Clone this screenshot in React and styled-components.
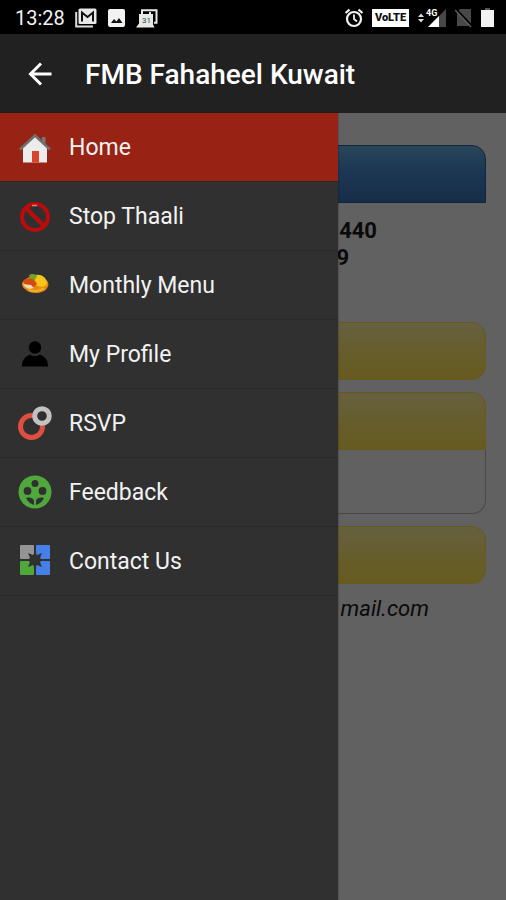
import React from "react";
import styled, { createGlobalStyle } from "styled-components";

const COLORS = {
  statusBar: "#000",
  appBar: "#212121",
  drawer: "#303030",
  divider: "#292929",
  active: "#982315",
  page: "#616161",
  text: "#f2f2f2",
};

const MENU = [
  { label: "Home", icon: HomeIcon },
  { label: "Stop Thaali", icon: StopIcon },
  { label: "Monthly Menu", icon: FoodIcon },
  { label: "My Profile", icon: ProfileIcon },
  { label: "RSVP", icon: RsvpIcon },
  { label: "Feedback", icon: FeedbackIcon },
  { label: "Contact Us", icon: ContactIcon },
];

const App = () => {
  return (
    <Screen>
      <GlobalStyle />
      <StatusBar />
      <AppBar>
        <BackButton type="button" aria-label="Back">
          <svg width="24" height="24" viewBox="0 0 24 24" fill="none">
            <path
              d="M23.500 12H2.500M13 1.500 2.500 12 13 22.500"
              stroke="#fff"
              strokeWidth="3"
            />
          </svg>
        </BackButton>
        <Title>FMB Fahaheel Kuwait</Title>
      </AppBar>
      <Body>
        <Content>
          <BlueHeader />
          <Phones>
            <Phone $end={109}>440</Phone>
            <Phone $end={137}>9</Phone>
          </Phones>
          <Cards>
            <YellowBar />
            <Panel>
              <YellowBar $open />
              <PanelBody />
            </Panel>
            <YellowBar />
          </Cards>
          <Email>mail.com</Email>
        </Content>
        <Drawer>
          {MENU.map(({ label, icon: Icon }, i) => (
            <MenuLink key={label} href="#" $active={i === 0}>
              <Icon />
              <MenuLabel>{label}</MenuLabel>
            </MenuLink>
          ))}
        </Drawer>
      </Body>
    </Screen>
  );
};

export default App;

function StatusBar() {
  return (
    <StatusRow>
      <Clock>13:28</Clock>
      <StatusGroup>
        <svg width="22" height="20" viewBox="0 0 22 20">
          <path d="M1.200 4v14.500H18" fill="none" stroke="#ddd" strokeWidth="2" />
          <rect x="3.500" y="0.500" width="18" height="15.500" rx="1.500" fill="#e8e8e8" />
          <path
            d="M7 13.500V4.500l5.500 4.500L18 4.500v9"
            fill="none"
            stroke="#111"
            strokeWidth="2"
          />
        </svg>
        <svg width="17" height="18" viewBox="0 0 17 18">
          <rect width="17" height="18" rx="2" fill="#f2f2f2" />
          <path d="m3 14 3-4 2.500 2.500L11 9l3.500 5z" fill="#111" />
        </svg>
        <svg width="22" height="19" viewBox="0 0 22 19">
          <path
            d="M6 4V1.200h14.500v12.600H18"
            fill="none"
            stroke="#e8e8e8"
            strokeWidth="2"
          />
          <path d="M3 5h14v10.500l1.500 3H0l3-4z" fill="#e8e8e8" />
          <path d="M6 3v3M14 3v3" stroke="#e8e8e8" strokeWidth="2" />
          <text x="6" y="14" fontSize="8" fontFamily="Roboto, sans-serif" fill="#444">
            31
          </text>
        </svg>
      </StatusGroup>
      <StatusGroup $end>
        <svg width="20" height="20" viewBox="0 0 20 20" fill="none" stroke="#f2f2f2">
          <circle cx="10" cy="11" r="7" strokeWidth="2.200" />
          <path d="M10 6.500V11l3 2.500" strokeWidth="1.800" />
          <path d="m1.500 5 4-3.300M18.500 5l-4-3.300" strokeWidth="2.200" />
        </svg>
        <Volte>VoLTE</Volte>
        <svg width="30" height="20" viewBox="0 0 30 20">
          <path d="m1 9 3-3.500L7 9zM1 11h6l-3 3.500z" fill="#ddd" />
          <path d="M11 19 29 1v18z" fill="#484848" />
          <path d="M11 19l11-11V19z" fill="#fff" />
          <text
            x="9"
            y="8"
            fontSize="9"
            fontWeight="700"
            fontFamily="Roboto, sans-serif"
            fill="#fff"
          >
            4G
          </text>
        </svg>
        <svg width="18" height="20" viewBox="0 0 18 20">
          <path d="M5 1h11v17H2V4z" fill="#484848" />
          <path d="m0 0 17 18" stroke="#000" strokeWidth="2" />
          <path d="m0 2 16 17" stroke="#5c5c5c" strokeWidth="1.500" />
        </svg>
        <svg width="13" height="20" viewBox="0 0 13 20">
          <path d="M4 0h5v2h4v17H0V2h4z" fill="#f2f2f2" />
          <path d="M4 0h5v2H4z" fill="#555" />
        </svg>
      </StatusGroup>
    </StatusRow>
  );
}

function HomeIcon() {
  return (
    <Glyph viewBox="0 0 34 34">
      <path d="M5 16 17 5l12 11v16.500H5z" fill="#ececec" />
      <path d="M24 7h3.500v7L24 11z" fill="#777" />
      <path d="M2 19.500 17 5.500l15 14" fill="none" stroke="#707070" strokeWidth="2.600" />
      <path d="M14 21h7v11.500h-7z" fill="#d8452f" />
    </Glyph>
  );
}

function StopIcon() {
  return (
    <Glyph viewBox="0 0 34 34" fill="none" stroke="#bd0b0b">
      <circle cx="17" cy="18" r="13" strokeWidth="4" />
      <path d="m8 9 18 18" strokeWidth="4" />
      <path d="M14 6.500h5" stroke="#d98080" strokeWidth="1.500" />
    </Glyph>
  );
}

function FoodIcon() {
  return (
    <Glyph viewBox="0 0 34 34">
      <path d="M4 15c4-7 19-11 24-3 3 2 3 6 1 8-3 6-17 7-22 1-2-1-3-3-3-6z" fill="#e8890f" />
      <path d="M15 8c6-3 13 0 14 7 0 4-7 5-11 2z" fill="#f6c51b" />
      <path d="M5 13c4-4 11-4 14 3l-4 4c-4-1-8-2-10-7z" fill="#d24a12" />
      <path d="M11 7c3-2 7-1 8 1l-2 4-5-2z" fill="#6fa32a" />
      <path d="m5 16 8 1 3 3-5 1c-3-1-5-3-6-5z" fill="#f3d9b8" />
      <path d="M11 22c5 2 12 1 15-2" fill="none" stroke="#f6b02a" strokeWidth="2" />
    </Glyph>
  );
}

function ProfileIcon() {
  return (
    <Glyph viewBox="0 0 34 34" fill="#000">
      <circle cx="17" cy="10.500" r="6.200" />
      <path d="M4 29.500c0-6 2-9 8-12 3 2 7 2 10 0 6 3 8 6 8 12z" />
    </Glyph>
  );
}

function RsvpIcon() {
  return (
    <Glyph viewBox="0 0 34 34" fill="none">
      <circle cx="13.500" cy="20.500" r="11" stroke="#de4f3f" strokeWidth="5" />
      <circle cx="24" cy="10" r="7.300" fill="#303030" stroke="#c2c2c2" strokeWidth="5" />
    </Glyph>
  );
}

function FeedbackIcon() {
  return (
    <Glyph viewBox="0 0 34 34">
      <circle cx="17" cy="17" r="16.500" fill="#50a83d" />
      <g fill="#303030">
        <circle cx="17" cy="8.500" r="3.500" />
        <circle cx="9.500" cy="16" r="3.900" />
        <circle cx="24.500" cy="16" r="3.900" />
        <path d="M8 23c4-1 7 0 8 2.500v4.500c-3-1-6-3-8-7zM26 23c-4-1-7 0-8 2.500v4.500c3-1 6-3 8-7z" />
      </g>
    </Glyph>
  );
}

function ContactIcon() {
  return (
    <Glyph viewBox="0 0 34 34">
      <rect x="2" y="1" width="14" height="14" rx="1" fill="#949494" />
      <rect x="18" y="1" width="14" height="14" rx="1" fill="#4680e6" />
      <rect x="2" y="17" width="14" height="14" rx="1" fill="#50a83d" />
      <rect x="18" y="17" width="14" height="14" rx="1" fill="#4680e6" />
      <path
        d="m10 9 5 2 2-3 2 3 5-2-2 5 3 2-3 2 2 5-5-2-2 3-2-3-5 2 2-5-3-2 3-2z"
        fill="#303030"
      />
    </Glyph>
  );
}

const GlobalStyle = createGlobalStyle`
  * {
    box-sizing: border-box;
  }
  body {
    margin: 0;
    background: ${COLORS.page};
    font-family: Roboto, "Liberation Sans", sans-serif;
  }
`;

const Screen = styled.div`
  display: flex;
  flex-direction: column;
  min-height: 100vh;
`;

const StatusRow = styled.div`
  display: flex;
  align-items: center;
  height: 34px;
  padding: 2px 12px 0 15px;
  background: ${COLORS.statusBar};
`;

const Clock = styled.span`
  margin-right: 10px;
  font-size: 20px;
  line-height: 24px;
  color: ${COLORS.text};
`;

const StatusGroup = styled.div`
  display: flex;
  align-items: center;
  gap: ${({ $end }) => ($end ? 8 : 11)}px;
  margin-left: ${({ $end }) => ($end ? "auto" : 0)};
`;

const Volte = styled.span`
  width: 37px;
  background: #fff;
  color: #111;
  font-size: 11px;
  font-weight: 900;
  line-height: 18px;
  text-align: center;
`;

const AppBar = styled.header`
  display: flex;
  align-items: center;
  height: 79px;
  padding: 0 28px;
  background: ${COLORS.appBar};
`;

const BackButton = styled.button`
  display: flex;
  margin-right: 33px;
  padding: 0;
  border: 0;
  background: none;
  cursor: pointer;
`;

const Title = styled.h1`
  margin: 0;
  padding-top: 2px;
  font-size: 28px;
  font-weight: 500;
  line-height: 32px;
  color: #fff;
  white-space: nowrap;
`;

const Body = styled.div`
  position: relative;
  flex: 1;
  display: flex;
  flex-direction: column;
`;

const Content = styled.main`
  padding: 32px 20px;
  color: #0a0a0a;
`;

const BlueHeader = styled.div`
  height: 58px;
  border: 1px solid #10263a;
  border-radius: 14px 14px 0 0;
  background: linear-gradient(#29465a, #1d3854 40%, #172d48);
`;

const Phones = styled.div`
  display: flex;
  flex-direction: column;
  align-items: flex-end;
  padding: 14px 0 51px;
`;

const Phone = styled.span`
  padding-right: ${({ $end }) => $end}px;
  font-size: 22px;
  font-weight: 700;
  line-height: 27px;
`;

const Cards = styled.div`
  display: flex;
  flex-direction: column;
  gap: 12px;
`;

const YellowBar = styled.div`
  height: 58px;
  border: 1px solid #65591f;
  border-radius: ${({ $open }) => ($open ? "14px 14px 0 0" : "14px")};
  background: linear-gradient(#66603f, #665d2c 55%, #665b1f);
`;

const Panel = styled.section`
  display: flex;
  flex-direction: column;
`;

const PanelBody = styled.div`
  height: 64px;
  border: 1px solid #484848;
  border-top: 0;
  border-radius: 0 0 14px 14px;
`;

const Email = styled.p`
  margin: 10px 0 0;
  padding-right: 57px;
  font-size: 22px;
  font-style: italic;
  line-height: 30px;
  text-align: right;
`;

const Drawer = styled.nav`
  position: absolute;
  top: 0;
  bottom: 0;
  left: 0;
  width: 338px;
  max-width: 80%;
  background: ${COLORS.drawer};
  box-shadow: 0 0 2px rgba(0, 0, 0, 0.4);
`;

const MenuLink = styled.a`
  display: flex;
  align-items: center;
  gap: 17px;
  height: 69px;
  padding: 0 18px;
  border-bottom: 1px solid ${COLORS.divider};
  background: ${({ $active }) => ($active ? COLORS.active : "transparent")};
  color: ${COLORS.text};
  font-size: 23px;
  line-height: 28px;
  text-decoration: none;
`;

const MenuLabel = styled.span`
  padding-top: 2px;
`;

const Glyph = styled.svg`
  flex: none;
  width: 34px;
  height: 34px;
`;
